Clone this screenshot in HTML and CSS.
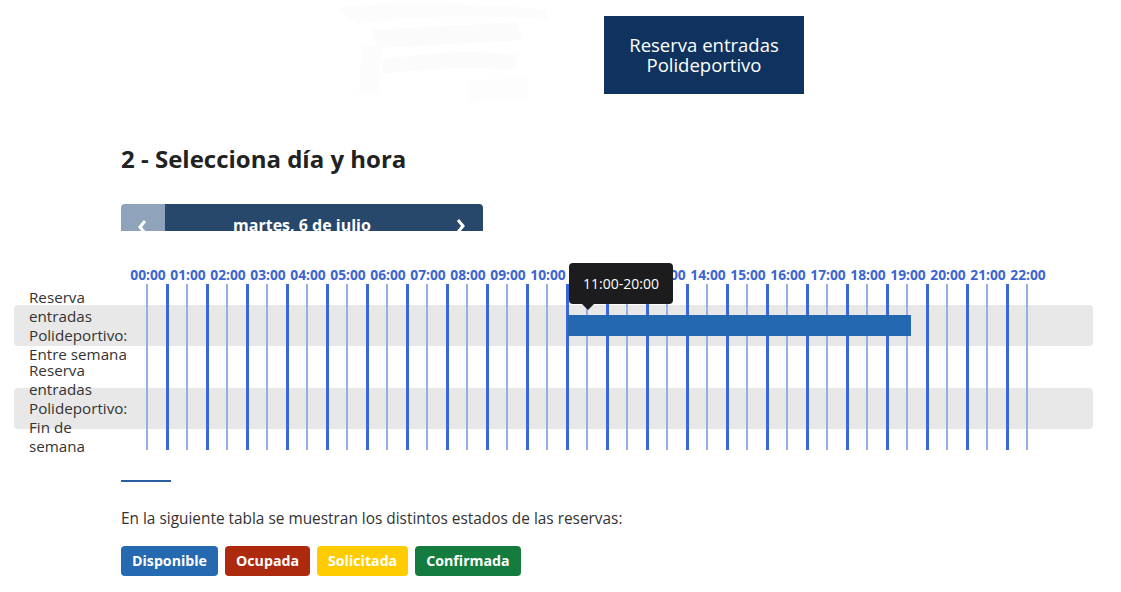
FILE: index.html
```html
<!DOCTYPE html>
<html lang="es">
<head>
<meta charset="utf-8">
<title>Reserva entradas Polideportivo</title>
<link rel="stylesheet" href="styles.css">
</head>
<body>
<header class="header">
  <svg class="logo" width="255" height="105" viewBox="0 0 255 105">
    <path d="M20 8 C70 0 150 2 230 10 L230 20 C160 14 90 16 40 24 Z" fill="#fcfcfc"/>
    <path d="M55 30 L200 22 L205 40 L60 48 Z" fill="#fbfbfb"/>
    <path d="M45 45 L65 45 L62 95 L42 95 Z" fill="#fcfcfc"/>
    <path d="M65 60 C110 52 160 50 200 55 L198 70 C150 66 110 68 66 74 Z" fill="#fbfbfb"/>
    <path d="M150 80 L210 78 L212 100 L152 102 Z" fill="#fdfdfd"/>
  </svg>
  <div class="brand-box">Reserva entradas<br>Polideportivo</div>
</header>

<main>
  <section class="content">
    <h2 class="title">2 - Selecciona día y hora</h2>
    <div class="day-nav">
      <div class="day-nav-prev">
        <svg width="12" height="16" viewBox="0 0 12 16"><polyline points="8,2 3,8 8,14" fill="none" stroke="#fff" stroke-width="3"/></svg>
      </div>
      <div class="day-nav-main">
        <span class="day-nav-label">martes, 6 de julio</span>
        <svg class="day-nav-next" width="12" height="16" viewBox="0 0 12 16"><polyline points="4,2 9,8 4,14" fill="none" stroke="#fff" stroke-width="3"/></svg>
      </div>
    </div>
  </section>

  <section class="timeline">
    <div class="hours">
      <span>00:00</span><span>01:00</span><span>02:00</span><span>03:00</span><span>04:00</span><span>05:00</span><span>06:00</span><span>07:00</span><span>08:00</span><span>09:00</span><span>10:00</span><span>11:00</span><span>12:00</span><span>13:00</span><span>14:00</span><span>15:00</span><span>16:00</span><span>17:00</span><span>18:00</span><span>19:00</span><span>20:00</span><span>21:00</span><span>22:00</span>
    </div>
    <div class="grid-area">
      <div class="row">
        <div class="band">
          <div class="row-label">Reserva entradas Polideportivo: Entre semana</div>
          <div class="track"><div class="bar" style="margin-left:438px;width:343px"></div></div>
        </div>
      </div>
      <div class="row">
        <div class="band">
          <div class="row-label">Reserva entradas Polideportivo: Fin de semana</div>
          <div class="track"></div>
        </div>
      </div>
      <div class="lines">
        <i class="l"></i><i class="d"></i><i class="l"></i><i class="d"></i><i class="l"></i><i class="d"></i><i class="l"></i><i class="d"></i><i class="l"></i><i class="d"></i>
        <i class="l"></i><i class="d"></i><i class="l"></i><i class="d"></i><i class="l"></i><i class="d"></i><i class="l"></i><i class="d"></i><i class="l"></i><i class="d"></i>
        <i class="l"></i><i class="d"></i><i class="l"></i><i class="d"></i><i class="l"></i><i class="d"></i><i class="l"></i><i class="d"></i><i class="l"></i><i class="d"></i>
        <i class="l"></i><i class="d"></i><i class="l"></i><i class="d"></i><i class="l"></i><i class="d"></i><i class="l"></i><i class="d"></i><i class="l"></i><i class="d"></i>
        <i class="l"></i><i class="d"></i><i class="l"></i><i class="d"></i><i class="l"></i>
      </div>
    </div>
    <div class="tooltip">11:00-20:00</div>
  </section>

  <section class="content legend">
    <hr class="rule">
    <p class="legend-text">En la siguiente tabla se muestran los distintos estados de las reservas:</p>
    <div class="badges">
      <span class="badge available">Disponible</span>
      <span class="badge busy">Ocupada</span>
      <span class="badge requested">Solicitada</span>
      <span class="badge confirmed">Confirmada</span>
    </div>
  </section>
</main>
</body>
</html>
```

FILE: styles.css
```css
* { box-sizing: border-box; }

body {
  margin: 0;
  font-family: "Open Sans", "DejaVu Sans", sans-serif;
  color: #333;
  background: #fff;
}

.header {
  display: flex;
  justify-content: center;
  align-items: flex-start;
  gap: 32px;
  height: 110px;
}

.logo { display: block; }

.brand-box {
  margin-top: 16px;
  width: 200px;
  height: 78px;
  background: #0f335e;
  color: #fff;
  font-size: 18.5px;
  line-height: 20px;
  display: flex;
  align-items: center;
  justify-content: center;
  text-align: center;
}

.content { padding-left: 121px; }

.title {
  margin: 34px 0 0;
  font-size: 24px;
  line-height: 30px;
  font-weight: 700;
  color: #222;
}

.day-nav {
  margin-top: 30px;
  width: 362px;
  height: 27px;
  display: flex;
  overflow: hidden;
  border-radius: 4px 4px 0 0;
}

.day-nav-prev {
  width: 44px;
  background: #8fa4bb;
  display: flex;
  justify-content: center;
  padding-top: 15px;
}

.day-nav-main {
  flex: 1;
  background: #27476b;
  display: flex;
  justify-content: center;
  position: relative;
  padding: 11px 44px 0 0;
}

.day-nav-label {
  color: #fff;
  font-weight: 700;
  font-size: 16px;
  line-height: 20px;
}

.day-nav-next {
  position: absolute;
  right: 17px;
  top: 14px;
}

.timeline {
  position: relative;
  margin: 35px 28px 0 14px;
}

.hours {
  display: flex;
  padding-left: 114px;
  height: 18px;
}

.hours span {
  width: 40px;
  flex: none;
  text-align: center;
  font-size: 13.8px;
  line-height: 18px;
  font-weight: 700;
  color: #3b64d4;
  white-space: nowrap;
}

.grid-area { position: relative; }

.row { height: 83px; padding: 21px 0; }

.band {
  height: 41px;
  background: #e8e8e8;
  border-radius: 4px;
  display: flex;
  align-items: center;
}

.row-label {
  flex: none;
  width: 116px;
  padding-left: 15px;
  font-size: 15.2px;
  line-height: 19px;
  color: #333;
}

.track {
  flex: 1;
  display: flex;
  align-items: center;
}

.bar {
  position: relative;
  z-index: 2;
  height: 21px;
  background: #2468b0;
}

.lines {
  position: absolute;
  top: 0;
  bottom: 0;
  left: 123px;
  display: flex;
  z-index: 1;
}

.lines i {
  width: 20px;
  flex: none;
  display: flex;
  justify-content: center;
}

.lines i::before {
  content: "";
  display: block;
  height: 100%;
}

.lines .l::before { width: 2px; background: #95aee6; }
.lines .d::before { width: 3px; background: #3a68d8; }

.tooltip {
  position: absolute;
  z-index: 3;
  left: 555px;
  top: -3px;
  width: 104px;
  height: 41px;
  background: #1c1c1e;
  color: #fff;
  border-radius: 4px;
  font-size: 14px;
  line-height: 41px;
  text-align: center;
}

.tooltip::after {
  content: "";
  position: absolute;
  left: 13px;
  bottom: -6px;
  border-left: 6px solid transparent;
  border-right: 6px solid transparent;
  border-top: 6px solid #1c1c1e;
}

.rule {
  margin: 30px 0 0;
  width: 50px;
  height: 2px;
  border: 0;
  background: #2a5d9f;
}

.legend-text {
  margin: 27px 0 0;
  font-size: 15.4px;
  line-height: 20px;
  color: #333;
}

.badges {
  display: flex;
  gap: 7px;
  margin-top: 17px;
}

.badge {
  height: 30px;
  padding: 0 11px;
  border-radius: 4px;
  color: #fff;
  font-weight: 700;
  font-size: 14.2px;
  line-height: 30px;
}

.available { background: #2569b0; }
.busy { background: #ad2a0e; }
.requested { background: #fecc00; }
.confirmed { background: #137c3e; }
```
